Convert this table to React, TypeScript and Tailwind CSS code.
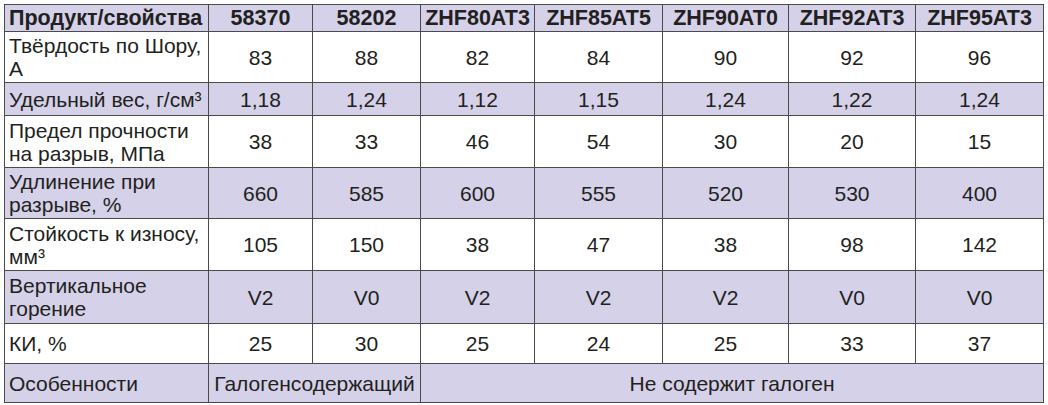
const columns = ["58370", "58202", "ZHF80AT3", "ZHF85AT5", "ZHF90AT0", "ZHF92AT3", "ZHF95AT3"];
const widths = [204, 104, 108, 114, 128, 126, 127, 128];

type Row = {
  label: React.ReactNode;
  values: string[];
  height: string;
  shaded: boolean;
};

const rows: Row[] = [
  { label: <>Твёрдость по Шору,<br />А</>, values: ["83", "88", "82", "84", "90", "92", "96"], height: "h-[51px]", shaded: false },
  { label: <>Удельный вес, г/см³</>, values: ["1,18", "1,24", "1,12", "1,15", "1,24", "1,22", "1,24"], height: "h-[33px]", shaded: true },
  { label: <>Предел прочности<br />на разрыв, МПа</>, values: ["38", "33", "46", "54", "30", "20", "15"], height: "h-[52px]", shaded: false },
  { label: <>Удлинение при<br />разрыве, %</>, values: ["660", "585", "600", "555", "520", "530", "400"], height: "h-[51px]", shaded: true },
  { label: <>Стойкость к износу,<br />мм³</>, values: ["105", "150", "38", "47", "38", "98", "142"], height: "h-[52px]", shaded: false },
  { label: <>Вертикальное<br />горение</>, values: ["V2", "V0", "V2", "V2", "V2", "V0", "V0"], height: "h-[53px]", shaded: true },
  { label: <>КИ, %</>, values: ["25", "30", "25", "24", "25", "33", "37"], height: "h-[40px]", shaded: false },
];

export default function App() {
  return (
    <div className="w-[1048px] h-[405px] bg-white pt-[4px] pl-[4px] font-['Liberation_Sans',Arial,sans-serif] text-[#231f20]">
      <table className="table-fixed border-collapse w-[1039px] text-[21px] leading-[23px] border border-[#6b6b6b]">
        <colgroup>
          {widths.map((w, i) => (
            <col key={i} style={{ width: w }} />
          ))}
        </colgroup>
        <thead>
          <tr className="h-[27px] bg-[#d4d1e8] text-[21.5px]">
            <th className="border border-[#4a4a4a] px-[4px] text-left font-bold whitespace-nowrap">Продукт/свойства</th>
            {columns.map((c) => (
              <th key={c} className="border border-[#4a4a4a] text-center font-bold whitespace-nowrap">
                {c}
              </th>
            ))}
          </tr>
        </thead>
        <tbody>
          {rows.map((r, i) => (
            <tr key={i} className={`${r.height} ${r.shaded ? "bg-[#d4d1e8]" : "bg-white"}`}>
              <td className="border border-[#4a4a4a] px-[4px] text-left align-middle whitespace-nowrap">{r.label}</td>
              {r.values.map((v, j) => (
                <td key={j} className="border border-[#4a4a4a] text-center align-middle">
                  {v}
                </td>
              ))}
            </tr>
          ))}
          <tr className="h-[39px] bg-[#d4d1e8]">
            <td className="border border-[#4a4a4a] px-[4px] text-left">Особенности</td>
            <td colSpan={2} className="border border-[#4a4a4a] text-center whitespace-nowrap">
              Галогенсодержащий
            </td>
            <td colSpan={5} className="border border-[#4a4a4a] text-center">
              Не содержит галоген
            </td>
          </tr>
        </tbody>
      </table>
    </div>
  );
}
